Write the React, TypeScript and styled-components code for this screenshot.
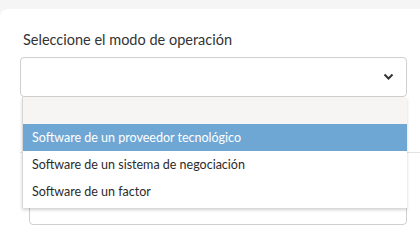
import styled, { createGlobalStyle } from "styled-components";

const GlobalStyle = createGlobalStyle`
  html, body {
    margin: 0;
    padding: 0;
    background: #f6f5f5;
    font-family: "Lato", "Noto Sans", sans-serif;
    color: #333;
  }
`;

const Page = styled.div`
  width: 420px;
  height: 233px;
  overflow: hidden;
  padding-top: 9px;
  box-sizing: border-box;
`;

const Card = styled.div`
  background: #fff;
  border-top-left-radius: 8px;
  height: 240px;
  padding: 22px 0 0 20px;
  box-sizing: border-box;
`;

const Label = styled.div`
  font-size: 14.5px;
  color: #333;
  margin-left: 3px;
  line-height: 18px;
  margin-bottom: 8px;
`;

const SelectWrap = styled.div`
  position: relative;
  width: 387px;
`;

const SelectBox = styled.div`
  height: 40px;
  box-sizing: border-box;
  border: 1px solid #cfcfcf;
  border-radius: 4px;
  display: flex;
  align-items: center;
  justify-content: flex-end;
  padding-right: 12px;
`;

const Menu = styled.ul`
  position: absolute;
  top: 40px;
  left: 2px;
  width: 384px;
  margin: 0;
  padding: 0 0 3px;
  list-style: none;
  background: #fff;
  border-left: 1px solid #d6d6d6;
  box-shadow: 0 2px 3px rgba(0, 0, 0, 0.18);
  z-index: 2;
`;

const Option = styled.li<{ $active?: boolean; $empty?: boolean }>`
  height: 27px;
  display: flex;
  align-items: center;
  padding-left: 9px;
  font-size: 12.5px;
  background: ${(p) => (p.$active ? "#6fa7d4" : p.$empty ? "#f7f4f4" : "#fff")};
  color: ${(p) => (p.$active ? "#fff" : "#2b2b2b")};
`;

const Divider = styled.div`
  margin-top: 55px;
  border-top: 1px solid #e3e3e3;
`;

const SecondSelect = styled.div`
  margin: 45px 0 0 9px;
  width: 378px;
  height: 27px;
  box-sizing: border-box;
  border: 1px solid #cfcfcf;
  border-radius: 4px;
  position: relative;
`;

const Caret = styled.span`
  position: absolute;
  right: 8px;
  top: 5px;
  width: 0;
  height: 0;
  border-left: 3px solid transparent;
  border-right: 3px solid transparent;
  border-top: 3px solid #333;
`;

function Chevron() {
  return (
    <svg width="11" height="8" viewBox="0 0 11 8">
      <polyline
        points="1.5,1.5 5.5,5.5 9.5,1.5"
        fill="none"
        stroke="#333"
        strokeWidth="2"
      />
    </svg>
  );
}

const options = [
  "Software de un proveedor tecnológico",
  "Software de un sistema de negociación",
  "Software de un factor",
];

export default function App() {
  return (
    <>
      <GlobalStyle />
      <Page>
        <Card>
          <Label>Seleccione el modo de operación</Label>
          <SelectWrap>
            <SelectBox>
              <Chevron />
            </SelectBox>
            <Menu>
              <Option $empty />
              {options.map((o, i) => (
                <Option key={o} $active={i === 0}>
                  {o}
                </Option>
              ))}
            </Menu>
          </SelectWrap>
          <Divider />
          <SecondSelect>
            <Caret />
          </SecondSelect>
        </Card>
      </Page>
    </>
  );
}
